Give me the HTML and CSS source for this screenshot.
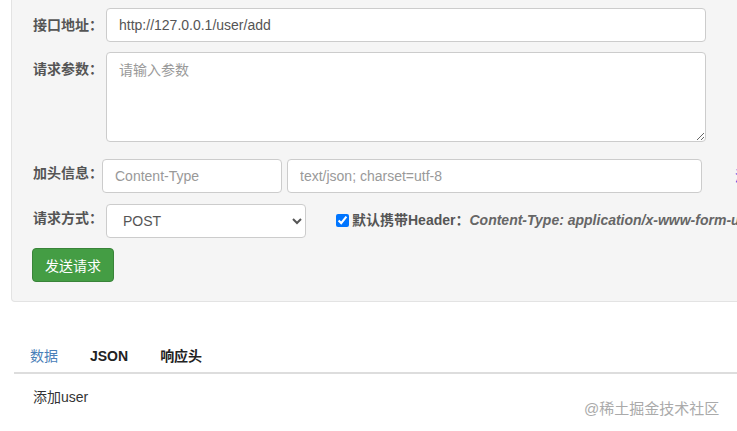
FILE: index.html
```html
<!DOCTYPE html>
<html lang="zh-CN">
<head>
  <meta charset="UTF-8" />
  <meta name="viewport" content="width=device-width, initial-scale=1" />
  <title>接口测试</title>
  <link rel="stylesheet" href="styles.css">
</head>
<body>
  <div class="well">
    <div class="form-row">
      <label class="label">接口地址：</label>
      <input class="form-control url" type="text" value="http://127.0.0.1/user/add" />
    </div>
    <div class="form-row row-params">
      <label class="label">请求参数：</label>
      <textarea class="form-control params" placeholder="请输入参数"></textarea>
    </div>
    <div class="form-row row-header">
      <label class="label label-short label-up">加头信息：</label>
      <input class="form-control header-key" type="text" placeholder="Content-Type" />
      <input class="form-control header-val" type="text" placeholder="text/json; charset=utf-8" />
      <a class="add-link" href="#">添加</a>
    </div>
    <div class="form-row row-method">
      <label class="label label-up">请求方式：</label>
      <select class="form-control method">
        <option>POST</option>
        <option>GET</option>
      </select>
      <label class="default-header">
        <input type="checkbox" checked />
        <span class="dh-title">默认携带Header：</span>
        <em>Content-Type: application/x-www-form-urlencoded</em>
      </label>
    </div>
    <button class="btn-send">发送请求</button>
  </div>

  <div class="result">
    <ul class="tabs">
      <li class="active">数据</li>
      <li>JSON</li>
      <li>响应头</li>
    </ul>
    <div class="tab-content">添加user</div>
  </div>

  <div class="watermark">@稀土掘金技术社区</div>
</body>
</html>
```

FILE: styles.css
```css
* { box-sizing: border-box; }
body {
  margin: 0;
  background: #fff;
  font-family: "Liberation Sans", "Noto Sans CJK SC", sans-serif;
  font-size: 14px;
  line-height: 20px;
  color: #333;
  overflow: hidden;
  height: 431px;
  position: relative;
}
.well {
  margin-left: 11px;
  width: 800px;
  padding: 8px 0 19px 21px;
  background: #f5f5f5;
  border: 1px solid #e3e3e3;
  border-top: none;
  border-radius: 0 0 0 4px;
}
.form-row {
  display: flex;
  align-items: flex-start;
  margin-bottom: 10px;
  white-space: nowrap;
}
.row-params { margin-bottom: 17px; }
.row-header { margin-bottom: 11px; }
.label {
  width: 73px;
  flex: none;
  padding-top: 7px;
  font-weight: bold;
  color: #555;
}
.label-short { width: 69px; }
.label-up { padding-top: 4px; }
.form-control {
  height: 34px;
  padding: 6px 12px;
  font-family: inherit;
  font-size: 14px;
  color: #555;
  background: #fff;
  border: 1px solid #ccc;
  border-radius: 4px;
  outline: none;
}
.form-control::placeholder { color: #999; }
.url { width: 600px; }
.params {
  width: 600px;
  height: 90px;
  resize: vertical;
  display: block;
}
.header-key { width: 180px; }
.header-val { width: 415px; margin-left: 5px; }
.add-link {
  margin-left: 33px;
  padding-top: 7px;
  color: #3a3adf;
  text-decoration: none;
}
.method {
  width: 200px;
  padding-left: 12px;
}
.default-header {
  display: flex;
  align-items: center;
  margin-left: 30px;
  padding-top: 6px;
  color: #555;
  font-weight: bold;
}
.default-header input {
  margin: 0 3px 0 0;
  width: 13px;
  height: 13px;
}
.default-header em { color: #666; }
.btn-send {
  width: 82px;
  height: 34px;
  padding: 0;
  margin-left: -1px;
  font-family: inherit;
  font-size: 14px;
  color: #fff;
  background: #449d44;
  border: 1px solid #398439;
  border-radius: 4px;
}
.result { margin: 34px 0 0 14px; }
.tabs {
  display: flex;
  margin: 0;
  padding: 0;
  list-style: none;
  border-bottom: 2px solid #ddd;
}
.tabs li {
  padding: 10px 15px 6px;
  margin-right: 2px;
  font-weight: bold;
  color: #222;
}
.tabs li.active {
  padding-left: 16px;
  font-weight: normal;
  color: #4a80b8;
}
.tab-content {
  padding: 13px 0 0 19px;
  color: #333;
}
.watermark {
  position: absolute;
  left: 584px;
  top: 399px;
  font-size: 15px;
  color: #aaa;
}
```
